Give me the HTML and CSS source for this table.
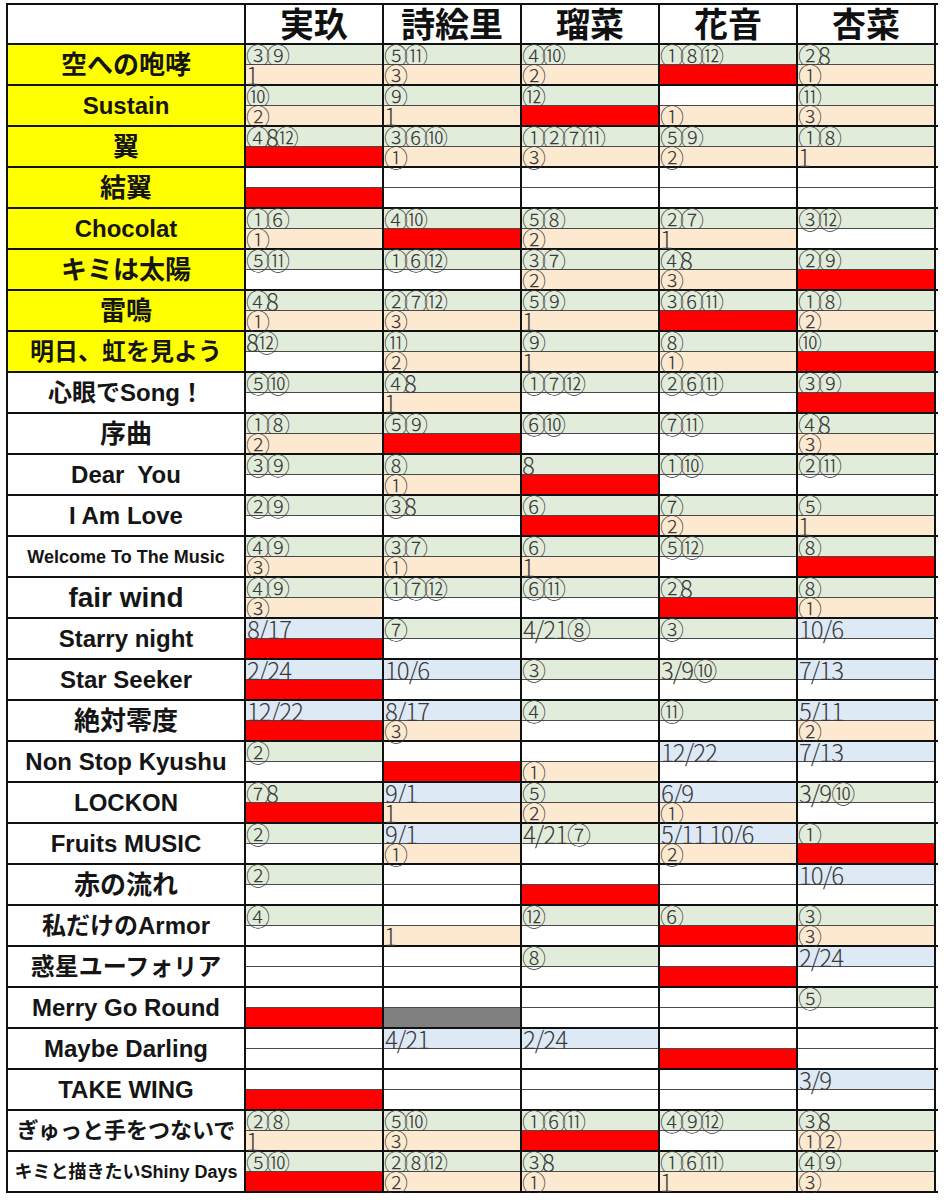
FILE: index.html
```html
<!DOCTYPE html>
<html lang="ja">
<head>
<meta charset="utf-8">
<title>Sheet</title>
<link rel="stylesheet" href="styles.css">
</head>
<body>
<div class="sheet">
  <div class="row head">
    <div class="s"></div>
    <div class="h">実玖</div>
    <div class="h">詩絵里</div>
    <div class="h">瑠菜</div>
    <div class="h">花音</div>
    <div class="h">杏菜</div>
  </div>

  <div class="row">
    <div class="s y f26">空への咆哮</div>
    <div class="c"><span class="g">③⑨</span><span class="o">1</span></div>
    <div class="c"><span class="g">⑤⑪</span><span class="o">③</span></div>
    <div class="c"><span class="g">④⑩</span><span class="o">②</span></div>
    <div class="c"><span class="g">①⑧⑫</span><span class="r"></span></div>
    <div class="c"><span class="g">②8</span><span class="o">①</span></div>
  </div>
  <div class="row">
    <div class="s y f24">Sustain</div>
    <div class="c"><span class="g">⑩</span><span class="o">②</span></div>
    <div class="c"><span class="g">⑨</span><span class="o">1</span></div>
    <div class="c"><span class="g">⑫</span><span class="r"></span></div>
    <div class="c"><span></span><span class="o">①</span></div>
    <div class="c"><span class="g">⑪</span><span class="o">③</span></div>
  </div>
  <div class="row">
    <div class="s y f26">翼</div>
    <div class="c"><span class="g">④8⑫</span><span class="r"></span></div>
    <div class="c"><span class="g">③⑥⑩</span><span class="o">①</span></div>
    <div class="c"><span class="g">①②⑦⑪</span><span class="o">③</span></div>
    <div class="c"><span class="g">⑤⑨</span><span class="o">②</span></div>
    <div class="c"><span class="g">①⑧</span><span class="o">1</span></div>
  </div>
  <div class="row">
    <div class="s y f26">結翼</div>
    <div class="c"><span></span><span class="r"></span></div>
    <div class="c"><span></span><span></span></div>
    <div class="c"><span></span><span></span></div>
    <div class="c"><span></span><span></span></div>
    <div class="c"><span></span><span></span></div>
  </div>
  <div class="row">
    <div class="s y f24">Chocolat</div>
    <div class="c"><span class="g">①⑥</span><span class="o">①</span></div>
    <div class="c"><span class="g">④⑩</span><span class="r"></span></div>
    <div class="c"><span class="g">⑤⑧</span><span class="o">②</span></div>
    <div class="c"><span class="g">②⑦</span><span class="o">1</span></div>
    <div class="c"><span class="g">③⑫</span><span></span></div>
  </div>
  <div class="row">
    <div class="s y f26">キミは太陽</div>
    <div class="c"><span class="g">⑤⑪</span><span></span></div>
    <div class="c"><span class="g">①⑥⑫</span><span></span></div>
    <div class="c"><span class="g">③⑦</span><span class="o">②</span></div>
    <div class="c"><span class="g">④8</span><span class="o">③</span></div>
    <div class="c"><span class="g">②⑨</span><span class="r"></span></div>
  </div>
  <div class="row">
    <div class="s y f26">雷鳴</div>
    <div class="c"><span class="g">④8</span><span class="o">①</span></div>
    <div class="c"><span class="g">②⑦⑫</span><span class="o">③</span></div>
    <div class="c"><span class="g">⑤⑨</span><span class="o">1</span></div>
    <div class="c"><span class="g">③⑥⑪</span><span class="r"></span></div>
    <div class="c"><span class="g">①⑧</span><span class="o">②</span></div>
  </div>
  <div class="row">
    <div class="s y f24">明日、虹を見よう</div>
    <div class="c"><span class="g">8⑫</span><span></span></div>
    <div class="c"><span class="g">⑪</span><span class="o">②</span></div>
    <div class="c"><span class="g">⑨</span><span class="o">1</span></div>
    <div class="c"><span class="g">⑧</span><span class="o">①</span></div>
    <div class="c"><span class="g">⑩</span><span class="r"></span></div>
  </div>
  <div class="row">
    <div class="s f24">心眼でSong！</div>
    <div class="c"><span class="g">⑤⑩</span><span></span></div>
    <div class="c"><span class="g">④8</span><span class="o">1</span></div>
    <div class="c"><span class="g">①⑦⑫</span><span></span></div>
    <div class="c"><span class="g">②⑥⑪</span><span></span></div>
    <div class="c"><span class="g">③⑨</span><span class="r"></span></div>
  </div>
  <div class="row">
    <div class="s f26">序曲</div>
    <div class="c"><span class="g">①⑧</span><span class="o">②</span></div>
    <div class="c"><span class="g">⑤⑨</span><span class="r"></span></div>
    <div class="c"><span class="g">⑥⑩</span><span></span></div>
    <div class="c"><span class="g">⑦⑪</span><span></span></div>
    <div class="c"><span class="g">④8</span><span class="o">③</span></div>
  </div>
  <div class="row">
    <div class="s f24 pre">Dear  You</div>
    <div class="c"><span class="g">③⑨</span><span></span></div>
    <div class="c"><span class="g">⑧</span><span class="o">①</span></div>
    <div class="c"><span class="g">8</span><span class="r"></span></div>
    <div class="c"><span class="g">①⑩</span><span></span></div>
    <div class="c"><span class="g">②⑪</span><span></span></div>
  </div>
  <div class="row">
    <div class="s f24">I Am Love</div>
    <div class="c"><span class="g">②⑨</span><span></span></div>
    <div class="c"><span class="g">③8</span><span></span></div>
    <div class="c"><span class="g">⑥</span><span class="r"></span></div>
    <div class="c"><span class="g">⑦</span><span class="o">②</span></div>
    <div class="c"><span class="g">⑤</span><span class="o">1</span></div>
  </div>
  <div class="row">
    <div class="s f18">Welcome To The Music</div>
    <div class="c"><span class="g">④⑨</span><span class="o">③</span></div>
    <div class="c"><span class="g">③⑦</span><span class="o">①</span></div>
    <div class="c"><span class="g">⑥</span><span class="o">1</span></div>
    <div class="c"><span class="g">⑤⑫</span><span></span></div>
    <div class="c"><span class="g">⑧</span><span class="r"></span></div>
  </div>
  <div class="row">
    <div class="s f28">fair wind</div>
    <div class="c"><span class="g">④⑨</span><span class="o">③</span></div>
    <div class="c"><span class="g">①⑦⑫</span><span></span></div>
    <div class="c"><span class="g">⑥⑪</span><span></span></div>
    <div class="c"><span class="g">②8</span><span class="r"></span></div>
    <div class="c"><span class="g">⑧</span><span class="o">①</span></div>
  </div>
  <div class="row">
    <div class="s f24">Starry night</div>
    <div class="c"><span class="b">8/17</span><span class="r"></span></div>
    <div class="c"><span class="g">⑦</span><span></span></div>
    <div class="c"><span class="g d">4/21⑧</span><span></span></div>
    <div class="c"><span class="g">③</span><span></span></div>
    <div class="c"><span class="b">10/6</span><span></span></div>
  </div>
  <div class="row">
    <div class="s f24">Star Seeker</div>
    <div class="c"><span class="b">2/24</span><span class="r"></span></div>
    <div class="c"><span class="b">10/6</span><span></span></div>
    <div class="c"><span class="g">③</span><span></span></div>
    <div class="c"><span class="g d">3/9⑩</span><span></span></div>
    <div class="c"><span class="b">7/13</span><span></span></div>
  </div>
  <div class="row">
    <div class="s f26">絶対零度</div>
    <div class="c"><span class="b">12/22</span><span class="r"></span></div>
    <div class="c"><span class="b">8/17</span><span class="o">③</span></div>
    <div class="c"><span class="g">④</span><span></span></div>
    <div class="c"><span class="g">⑪</span><span></span></div>
    <div class="c"><span class="b">5/11</span><span class="o">②</span></div>
  </div>
  <div class="row">
    <div class="s f24">Non Stop Kyushu</div>
    <div class="c"><span class="g">②</span><span></span></div>
    <div class="c"><span></span><span class="r"></span></div>
    <div class="c"><span></span><span class="o">①</span></div>
    <div class="c"><span class="b">12/22</span><span></span></div>
    <div class="c"><span class="b">7/13</span><span></span></div>
  </div>
  <div class="row">
    <div class="s f24">LOCKON</div>
    <div class="c"><span class="g">⑦8</span><span class="r"></span></div>
    <div class="c"><span class="b">9/1</span><span class="o">1</span></div>
    <div class="c"><span class="g">⑤</span><span class="o">②</span></div>
    <div class="c"><span class="b">6/9</span><span class="o">①</span></div>
    <div class="c"><span class="g d">3/9⑩</span><span></span></div>
  </div>
  <div class="row">
    <div class="s f24">Fruits MUSIC</div>
    <div class="c"><span class="g">②</span><span></span></div>
    <div class="c"><span class="b">9/1</span><span class="o">①</span></div>
    <div class="c"><span class="g d">4/21⑦</span><span></span></div>
    <div class="c"><span class="b">5/11 10/6</span><span class="o">②</span></div>
    <div class="c"><span class="g">①</span><span class="r"></span></div>
  </div>
  <div class="row">
    <div class="s f26">赤の流れ</div>
    <div class="c"><span class="g">②</span><span></span></div>
    <div class="c"><span></span><span></span></div>
    <div class="c"><span></span><span class="r"></span></div>
    <div class="c"><span></span><span></span></div>
    <div class="c"><span class="b">10/6</span><span></span></div>
  </div>
  <div class="row">
    <div class="s f24">私だけのArmor</div>
    <div class="c"><span class="g">④</span><span></span></div>
    <div class="c"><span></span><span class="o">1</span></div>
    <div class="c"><span class="g">⑫</span><span></span></div>
    <div class="c"><span class="g">⑥</span><span class="r"></span></div>
    <div class="c"><span class="g">③</span><span class="o">③</span></div>
  </div>
  <div class="row">
    <div class="s f24">惑星ユーフォリア</div>
    <div class="c"><span></span><span></span></div>
    <div class="c"><span></span><span></span></div>
    <div class="c"><span class="g">⑧</span><span></span></div>
    <div class="c"><span></span><span class="r"></span></div>
    <div class="c"><span class="b">2/24</span><span></span></div>
  </div>
  <div class="row">
    <div class="s f24">Merry Go Round</div>
    <div class="c"><span></span><span class="r"></span></div>
    <div class="c"><span></span><span class="k"></span></div>
    <div class="c"><span></span><span></span></div>
    <div class="c"><span></span><span></span></div>
    <div class="c"><span class="g">⑤</span><span></span></div>
  </div>
  <div class="row">
    <div class="s f24">Maybe Darling</div>
    <div class="c"><span></span><span></span></div>
    <div class="c"><span class="b">4/21</span><span></span></div>
    <div class="c"><span class="b">2/24</span><span></span></div>
    <div class="c"><span></span><span class="r"></span></div>
    <div class="c"><span></span><span></span></div>
  </div>
  <div class="row">
    <div class="s f24">TAKE WING</div>
    <div class="c"><span></span><span class="r"></span></div>
    <div class="c"><span></span><span></span></div>
    <div class="c"><span></span><span></span></div>
    <div class="c"><span></span><span></span></div>
    <div class="c"><span class="b">3/9</span><span></span></div>
  </div>
  <div class="row">
    <div class="s f22">ぎゅっと手をつないで</div>
    <div class="c"><span class="g">②⑧</span><span class="o">1</span></div>
    <div class="c"><span class="g">⑤⑩</span><span class="o">③</span></div>
    <div class="c"><span class="g">①⑥⑪</span><span class="r"></span></div>
    <div class="c"><span class="g">④⑨⑫</span><span></span></div>
    <div class="c"><span class="g">③8</span><span class="o">①②</span></div>
  </div>
  <div class="row">
    <div class="s f18">キミと描きたいShiny Days</div>
    <div class="c"><span class="g">⑤⑩</span><span class="r"></span></div>
    <div class="c"><span class="g">②⑧⑫</span><span class="o">②</span></div>
    <div class="c"><span class="g">③8</span><span class="o">①</span></div>
    <div class="c"><span class="g">①⑥⑪</span><span class="o">1</span></div>
    <div class="c"><span class="g">④⑨</span><span class="o">③</span></div>
  </div>
</div>
</body>
</html>
```

FILE: styles.css
```css
html, body {
  margin: 0;
  padding: 0;
  background: #ffffff;
}

body {
  font-family: "Liberation Sans", "Noto Sans CJK JP", sans-serif;
  color: #111111;
}

.sheet {
  margin: 3px 0 0 6px;
  width: 930px;
  border-top: 2px solid #111111;
  border-left: 2px solid #111111;
  box-sizing: content-box;
}

.row {
  display: grid;
  grid-template-columns: 238px repeat(5, 138px);
  height: 41px;
  border-bottom: 2px solid #111111;
  box-sizing: border-box;
}

.row.head {
  height: 40px;
}

.s {
  display: flex;
  align-items: center;
  justify-content: center;
  border-right: 2px solid #111111;
  font-weight: bold;
  line-height: 1;
  white-space: nowrap;
  overflow: hidden;
  color: #151515;
}

.s.y {
  background: #ffff00;
}

.pre {
  white-space: pre;
}

.f18 { font-size: 18px; }
.f22 { font-size: 22px; }
.f24 { font-size: 24px; }
.f26 { font-size: 26px; }
.f28 { font-size: 28px; }

.h {
  display: flex;
  align-items: center;
  justify-content: center;
  border-right: 2px solid #111111;
  font-family: "Noto Sans CJK JP", sans-serif;
  font-weight: bold;
  font-size: 34px;
  line-height: 1;
  color: #111111;
  padding-bottom: 2px;
}

.c {
  display: flex;
  flex-direction: column;
  border-right: 2px solid #111111;
  min-width: 0;
}

.c > span {
  display: block;
  height: 19px;
  line-height: 19px;
  padding-left: 0;
  font-family: "Noto Sans CJK JP", sans-serif;
  font-weight: 300;
  font-size: 24px;
  letter-spacing: -4px;
  color: #3a3a3a;
  white-space: nowrap;
}

.c > span:first-child {
  height: 20px;
  border-bottom: 1px solid #4a4a4a;
  box-sizing: border-box;
}

.c > span.b,
.c > span.d {
  letter-spacing: -1px;
  padding-left: 1px;
}

.g { background: #e2ecda; }
.b { background: #dde9f5; }
.o { background: #fde9d0; }
.r { background: #fe0000; }
.k { background: #808080; }
```
